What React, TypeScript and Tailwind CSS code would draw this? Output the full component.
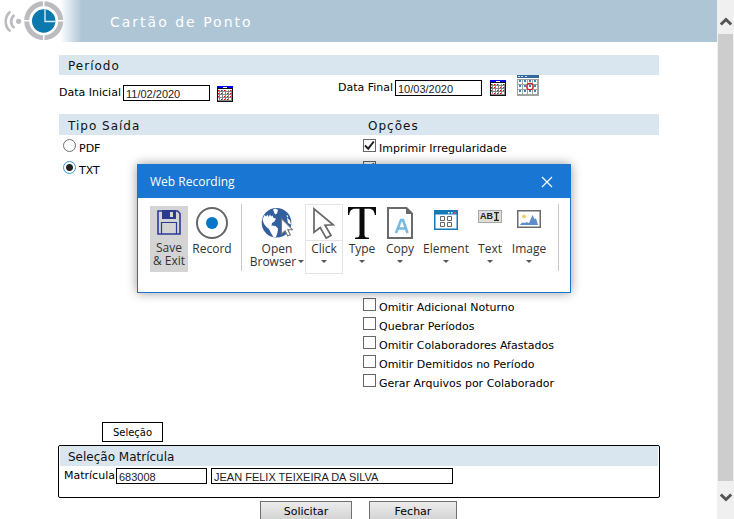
import type { ReactNode } from "react";

const VERDANA = "font-['Verdana','DejaVu_Sans',sans-serif]";
const ARIAL = "font-['Liberation_Sans',Arial,sans-serif]";
const SEGOE = "font-['Open_Sans','Noto_Sans',sans-serif]";

function SectionBar({ children, className = "" }: { children: ReactNode; className?: string }) {
  return (
    <div className={`flex items-center bg-[#d9e6ef] pt-[2px] text-[12px] text-[#111] ${className}`}>
      {children}
    </div>
  );
}

function TextField({ id, value, width }: { id: string; value: string; width: string }) {
  return (
    <input
      id={id}
      type="text"
      defaultValue={value}
      aria-label={id}
      className={`h-4 border border-black bg-white px-[2px] pt-px text-[11px] leading-[13px] text-[#222] ${ARIAL} ${width}`}
    />
  );
}

function CalendarIcon() {
  const cells = [0, 1, 2, 3, 4];
  return (
    <svg width="16" height="16" viewBox="0 0 16 16" shapeRendering="crispEdges" aria-hidden="true">
      <rect width="16" height="16" fill="#111" />
      <rect x="1" y="3" width="14" height="12" fill="#fff" />
      <rect width="16" height="2" fill="#0000f0" />
      <rect x="6" y="1" width="4" height="1" fill="#fff" />
      <rect y="2" width="16" height="1" fill="#111" />
      {cells.map((i) => (
        <rect key={`v${i}`} x={2 + i * 3} y="4" width="1" height="11" fill="#888" />
      ))}
      {[5, 8, 11, 14].map((y) => (
        <rect key={`h${y}`} x="1" y={y} width="14" height="1" fill="#888" />
      ))}
      {[4, 7, 10, 13].map((y, r) =>
        cells.map((i) => (
          <rect
            key={`${y}-${i}`}
            x={1 + i * 3}
            y={y}
            width="1"
            height="1"
            fill={(i + r) % 4 === 3 ? "#fff" : "#e00"}
          />
        ))
      )}
    </svg>
  );
}

function PeriodIcon() {
  return (
    <svg width="22" height="21" viewBox="0 0 22 21" shapeRendering="crispEdges" aria-hidden="true">
      <rect y="4" width="22" height="17" fill="#a0a4a0" />
      <rect width="22" height="3" fill="#33699b" />
      <rect y="3" width="22" height="1" fill="#fff" />
      <rect x="1" y="1" width="2" height="1" fill="#c9d9e6" />
      <rect x="4" y="1" width="2" height="1" fill="#c9d9e6" />
      <rect x="8" y="1" width="2" height="1" fill="#c9d9e6" />
      {[5, 10, 15].map((y) =>
        [1, 6, 11, 16].map((x) => (
          <g key={`${x}-${y}`}>
            <rect x={x} y={y} width="4" height="4" fill="#fff" />
            <rect x={x + 1} y={y} width="2" height="2" fill="#3d84bd" />
          </g>
        ))
      )}
      <circle cx="13" cy="11.5" r="3.2" fill="none" stroke="#d81e1e" strokeWidth="1.3" shapeRendering="auto" />
    </svg>
  );
}

function Logo() {
  return (
    <svg width="66" height="42" viewBox="0 0 66 42" aria-hidden="true">
      <g fill="none" stroke="#bbbbc0">
        <path d="M10.500 11.500a12.800 12.800 0 0 0 0 20" strokeWidth="2.600" />
        <path d="M14.500 15a8 8 0 0 0 0 13" strokeWidth="2.600" />
        <circle cx="43.700" cy="20.700" r="17" strokeWidth="5" />
      </g>
      <path d="M43.700 0v42M24 20.700h40" stroke="#fff" strokeWidth="1.600" />
      <circle cx="43.700" cy="20.700" r="14" fill="#fff" />
      <circle cx="43.700" cy="21" r="11.700" fill="#0b78ae" />
      <path d="M45 9.500v12h10.500" fill="none" stroke="#dcebf4" strokeWidth="1.400" />
      <circle cx="18.600" cy="21.300" r="2.600" fill="#bbbbc0" />
    </svg>
  );
}

function Caret() {
  return (
    <svg width="6" height="3" viewBox="0 0 6 3" aria-hidden="true" className="inline-block shrink-0">
      <path d="M0 0h6L3 3z" fill="#555" />
    </svg>
  );
}

function SaveIcon() {
  return (
    <svg width="24" height="25" viewBox="0 0 24 25" aria-hidden="true">
      <path d="M1 1h19.500L23 3.500V24H1z" fill="none" stroke="#2d3a94" strokeWidth="1.600" />
      <path d="M5 0h14v9H5z" fill="#2d3a94" />
      <path d="M13 2h3v5h-3z" fill="#d4d4d4" />
      <path d="M4.500 24V12.500h15V24" fill="none" stroke="#2d3a94" strokeWidth="1.200" />
    </svg>
  );
}

function RecordIcon() {
  return (
    <svg width="32" height="32" viewBox="0 0 32 32" aria-hidden="true">
      <circle cx="16" cy="16" r="15" fill="#fff" stroke="#666" strokeWidth="2" />
      <circle cx="16" cy="16" r="6" fill="#0577c6" />
    </svg>
  );
}

function BrowserIcon() {
  return (
    <svg width="32" height="32" viewBox="0 0 32 32" aria-hidden="true">
      <circle cx="15.500" cy="15.800" r="14.800" fill="#335f9f" />
      <path
        d="M1.500 12.500 3.500 8l1.500 1.500 1.500-2 1 2.500 1.500-2.500 1.200 2 1.300-1 1 2.500 2.500.5-1.500 3-2.500 1.500-.5 2.500 4 .5 2.500 2.500-.5 4-1.500 4.500-2.500.3-2.500-4.300-2-4-2.500-2L3 17z"
        fill="#fff"
      />
      <path d="m12 2.500 2.500-1 2.500 1.500-1 3.500-2 1z" fill="#fff" />
      <path d="m25.500 8 2 1-1.500 1.500 3 3 1 4-3-1.500z" fill="#fff" />
      <path d="M20.500 11.500v15.500l3.600-3.200 2.600 5.200 2.600-1.300-2.500-5h4.700z" fill="#fff" stroke="#777" strokeWidth="1.100" />
    </svg>
  );
}

function ClickIcon() {
  return (
    <svg width="24" height="33" viewBox="0 0 24 33" aria-hidden="true">
      <path
        d="M2 1.800v23.500l6.200-4.800 6 10.600 4.800-2.700-6-10.200 8.200-.4z"
        fill="#fff"
        stroke="#666"
        strokeWidth="1.700"
      />
    </svg>
  );
}

function TypeIcon() {
  return (
    <svg width="28" height="32" viewBox="0 0 28 32" aria-hidden="true">
      <path
        d="M0 0h28v8h-1.200c-.6-4-2-6.200-6-6.200h-4.300v25.700c0 2.300 1 3 4.500 3.200V32H7v-1.300c3.500-.2 4.500-.9 4.500-3.200V1.800H7.200C3.200 1.800 1.800 4 1.200 8H0z"
        fill="#0a0a0a"
      />
    </svg>
  );
}

function CopyIcon() {
  return (
    <svg width="26" height="32" viewBox="0 0 26 32" aria-hidden="true">
      <path d="M1 1h18.500L25 6.500V31H1z" fill="#fff" stroke="#6a6a6a" strokeWidth="2" />
      <path d="M19 0v7h7z" fill="#6a6a6a" />
      <path d="m9 26 5-13h2l4.500 13M10.500 21.500h9" fill="none" stroke="#74bbe2" strokeWidth="2.600" />
    </svg>
  );
}

function ElementIcon() {
  return (
    <svg width="24" height="20" viewBox="0 0 24 20" aria-hidden="true">
      <rect x=".75" y=".75" width="22.500" height="18.500" fill="#fff" stroke="#1479b8" strokeWidth="1.500" />
      <path d="M0 0h24v4.500H0z" fill="#1479b8" />
      <path d="M14 2h1.500v1.500H14zM17 2h1.500v1.500H17z" fill="#fff" />
      <path d="M20 2h2v1.500h-2z" fill="#e8505b" />
      <path d="M6.500 6.500h4v4h-4zM13.500 6.500h4v4h-4zM6.500 12.500h4v4h-4zM13.500 12.500h4v4h-4z" fill="none" stroke="#666" />
    </svg>
  );
}

function TextIcon() {
  return (
    <span
      className={`flex h-[13px] w-6 items-center border border-[#aaa] bg-[#deded8] pl-px text-[9px] font-bold leading-none text-[#222] ${ARIAL}`}
    >
      AB
      <svg width="5" height="9" viewBox="0 0 5 9" aria-hidden="true" className="ml-px">
        <path d="M0 .5h5M2.500.5v8M0 8.500h5" fill="none" stroke="#222" strokeWidth="1.400" />
      </svg>
    </span>
  );
}

function ImageIcon() {
  return (
    <svg width="24" height="18" viewBox="0 0 24 18" aria-hidden="true">
      <rect x=".75" y=".75" width="22.500" height="16.500" fill="#fff" stroke="#6b6b6b" strokeWidth="1.500" />
      <circle cx="7" cy="6.500" r="2" fill="#f3cf6b" />
      <path d="m3 15 2-2.500 3 .5 1.500-1 2.500 1L15.500 5l2 4 1.500-.5 2 6.500z" fill="#5b8ccb" />
    </svg>
  );
}

function Tool({
  icon,
  label,
  width,
  iconPad = "pt-[3px]",
  className = "",
}: {
  icon: ReactNode;
  label: string;
  width: string;
  iconPad?: string;
  className?: string;
}) {
  return (
    <button type="button" className={`flex h-[70px] flex-col items-center ${width} ${className}`}>
      <span className={`flex h-[38px] items-start justify-center ${iconPad}`}>{icon}</span>
      <span className="leading-[13px]">{label}</span>
      <span className="flex h-[13px] items-center">
        <Caret />
      </span>
    </button>
  );
}

function RecordingDialog() {
  return (
    <div
      role="dialog"
      aria-label="Web Recording"
      className={`absolute left-[137px] top-[164px] border border-[#1976d2] bg-white pb-[18px] shadow-[0_0_10px_rgba(0,0,0,0.4)] ${SEGOE}`}
    >
      <div className="flex h-[33px] items-center justify-between bg-[#1976d2] pl-3 pr-[17px] text-white">
        <h2 className="text-[12px]">Web Recording</h2>
        <button type="button" aria-label="Close">
          <svg width="12" height="12" viewBox="0 0 12 12" aria-hidden="true">
            <path d="m1 1 10 10M11 1 1 11" stroke="#fff" strokeWidth="1.200" />
          </svg>
        </button>
      </div>
      <div className="flex items-start pl-3 pr-[11px] pt-[6px] text-[12px] text-[#333]">
        <button type="button" className="mt-[2px] flex h-[66px] w-[38px] flex-col items-center bg-[#d4d4d4] pt-1">
          <span className="flex h-[31px] items-start">
            <SaveIcon />
          </span>
          <span className="whitespace-nowrap leading-[13px]">
            Save
            <br />
            &amp; Exit
          </span>
        </button>
        <button type="button" className="ml-1 flex w-10 flex-col items-center pt-[3px]">
          <span className="flex h-[35px] items-start">
            <RecordIcon />
          </span>
          <span className="leading-[13px]">Record</span>
        </button>
        <div className="ml-[9px] h-[67px] w-px bg-[#c8c8c8]" />
        <button type="button" className="ml-[7px] flex w-14 flex-col items-center pt-[3px]">
          <span className="flex h-[35px] items-start">
            <BrowserIcon />
          </span>
          <span className="whitespace-nowrap leading-[13px]">
            Open
            <br />
            <span className="flex items-center gap-[2px]">
              Browser <Caret />
            </span>
          </span>
        </button>
        <Tool
          icon={<ClickIcon />}
          label="Click"
          width="w-[38px]"
          className="bg-[linear-gradient(#e4e4e4,#e4e4e4)] bg-[length:100%_1px] bg-[position:0_36px] bg-no-repeat outline outline-1 -outline-offset-1 outline-[#e4e4e4]"
        />
        <Tool icon={<TypeIcon />} label="Type" width="w-[38px]" />
        <Tool icon={<CopyIcon />} label="Copy" width="w-[38px]" />
        <Tool icon={<ElementIcon />} label="Element" width="w-[54px]" iconPad="pt-[6px]" />
        <Tool icon={<TextIcon />} label="Text" width="w-[34px]" iconPad="pt-[6px]" />
        <Tool icon={<ImageIcon />} label="Image" width="w-[44px]" iconPad="pt-[6px]" />
        <div className="ml-[7px] h-[67px] w-px bg-[#c8c8c8]" />
      </div>
    </div>
  );
}

function Radio({ id, label, checked }: { id: string; label: string; checked?: boolean }) {
  return (
    <div className="flex h-[22px] items-start gap-[3px]">
      <input
        id={id}
        type="radio"
        name="saida"
        defaultChecked={checked}
        className="size-[13px] appearance-none rounded-full border border-[#707070] bg-white checked:border-[#3399dd] checked:bg-[radial-gradient(circle,#222_3px,#fff_4px)]"
      />
      <label htmlFor={id} className="pt-[3px] leading-[14px]">
        {label}
      </label>
    </div>
  );
}

function Check({ id, label, checked, height = "h-[19px]" }: { id: string; label?: string; checked?: boolean; height?: string }) {
  return (
    <div className={`flex items-start gap-[3px] ${height}`}>
      <span className="grid">
        <input
          id={id}
          type="checkbox"
          defaultChecked={checked}
          aria-label={label ?? "Opção"}
          className="peer col-start-1 row-start-1 size-[13px] appearance-none border border-[#666] bg-white"
        />
        <svg
          viewBox="0 0 13 13"
          aria-hidden="true"
          className="pointer-events-none col-start-1 row-start-1 hidden size-[13px] peer-checked:block"
        >
          <path d="m2 6.500 3.200 3.200L10.800 2.500" fill="none" stroke="#222" strokeWidth="2" />
        </svg>
      </span>
      {label && (
        <label htmlFor={id} className="pt-[3px] leading-[14px]">
          {label}
        </label>
      )}
    </div>
  );
}

function ScrollBar() {
  return (
    <div className="flex w-[17px] shrink-0 flex-col items-center bg-[#f0f0f0]" aria-hidden="true">
      <div className="flex h-[34px] items-end pb-2">
        <svg width="12" height="9" viewBox="0 0 12 9">
          <path d="m.8 7.500 5.200-5 5.200 5" fill="none" stroke="#555" strokeWidth="3" />
        </svg>
      </div>
      <div className="w-[15px] flex-1 bg-[#cdcdcd]" />
      <div className="flex h-[38px] items-start pt-3">
        <svg width="12" height="9" viewBox="0 0 12 9">
          <path d="m.8 1.500 5.200 5 5.200-5" fill="none" stroke="#555" strokeWidth="3" />
        </svg>
      </div>
    </div>
  );
}

export default function App() {
  return (
    <div className={`relative flex h-screen overflow-hidden bg-white text-[11px] text-black ${VERDANA}`}>
      <div className="flex-1 overflow-hidden">
        <header className="flex h-[42px] items-center bg-[linear-gradient(to_right,#fff_60px,#adc5d5_82px)]">
          <Logo />
          <h1 className="ml-11 pt-[2px] text-[14px] tracking-[2px] text-white">Cartão de Ponto</h1>
        </header>

        <main className="pl-[59px] pr-[58px] pt-[13px]">
          <SectionBar className="h-5 pl-[9px] tracking-[1px]">
            <h2>Período</h2>
          </SectionBar>
          <div className="flex h-[39px] items-start">
            <div className="flex w-[279px] items-start pt-[10px]">
              <label htmlFor="Data Inicial" className="w-16 pt-px leading-[14px]">
                Data Inicial
              </label>
              <TextField id="Data Inicial" value="11/02/2020" width="w-[87px]" />
              <button type="button" aria-label="Calendário inicial" className="ml-[7px] pt-px">
                <CalendarIcon />
              </button>
            </div>
            <label htmlFor="Data Final" className="w-[57px] pt-[6px] leading-[14px]">
              Data Final
            </label>
            <div className="flex pt-[5px]">
              <TextField id="Data Final" value="10/03/2020" width="w-[87px]" />
            </div>
            <button type="button" aria-label="Calendário final" className="ml-2 pt-[5px]">
              <CalendarIcon />
            </button>
            <button type="button" aria-label="Selecionar período" className="ml-[11px]">
              <PeriodIcon />
            </button>
          </div>

          <SectionBar className="h-[21px] pl-[9px] tracking-[1px]">
            <h2 className="w-[300px]">Tipo Saída</h2>
            <h2>Opções</h2>
          </SectionBar>
          <div className="flex h-[287px] pt-1">
            <fieldset className="w-[304px] pl-1">
              <Radio id="pdf" label="PDF" />
              <Radio id="txt" label="TXT" checked />
            </fieldset>
            <fieldset>
              <Check id="irregularidade" label="Imprimir Irregularidade" checked height="h-[22px]" />
              <Check id="opcao" checked height="h-[137px]" />
              <Check id="noturno" label="Omitir Adicional Noturno" />
              <Check id="quebrar" label="Quebrar Períodos" />
              <Check id="afastados" label="Omitir Colaboradores Afastados" />
              <Check id="demitidos" label="Omitir Demitidos no Período" />
              <Check id="arquivos" label="Gerar Arquivos por Colaborador" />
            </fieldset>
          </div>

          <button type="button" className="ml-[43px] flex h-5 w-[61px] items-center justify-center border border-black text-[10px]">
            Seleção
          </button>
          <section className="-mx-px mt-[3px] h-[53px] rounded-[2px] border border-black">
            <SectionBar className="mx-px h-5 pl-2">
              <h2>Seleção Matrícula</h2>
            </SectionBar>
            <div className="flex items-start pl-[5px] pt-[2px]">
              <label htmlFor="Matrícula" className="w-[52px] pt-px leading-[14px]">
                Matrícula
              </label>
              <TextField id="Matrícula" value="683008" width="w-[91px]" />
              <span className="ml-1 flex">
                <TextField id="Nome" value="JEAN FELIX TEIXEIRA DA SILVA" width="w-[242px]" />
              </span>
            </div>
          </section>
          <div className="flex gap-[17px] pl-[201px] pt-[3px]">
            <button type="button" className="h-[22px] w-[92px] border border-[#707070] bg-linear-to-b from-[#ececec] to-[#d0d0d0]">
              Solicitar
            </button>
            <button type="button" className="h-[22px] w-[88px] border border-[#707070] bg-linear-to-b from-[#ececec] to-[#d0d0d0]">
              Fechar
            </button>
          </div>
        </main>
      </div>
      <ScrollBar />
      <RecordingDialog />
    </div>
  );
}
